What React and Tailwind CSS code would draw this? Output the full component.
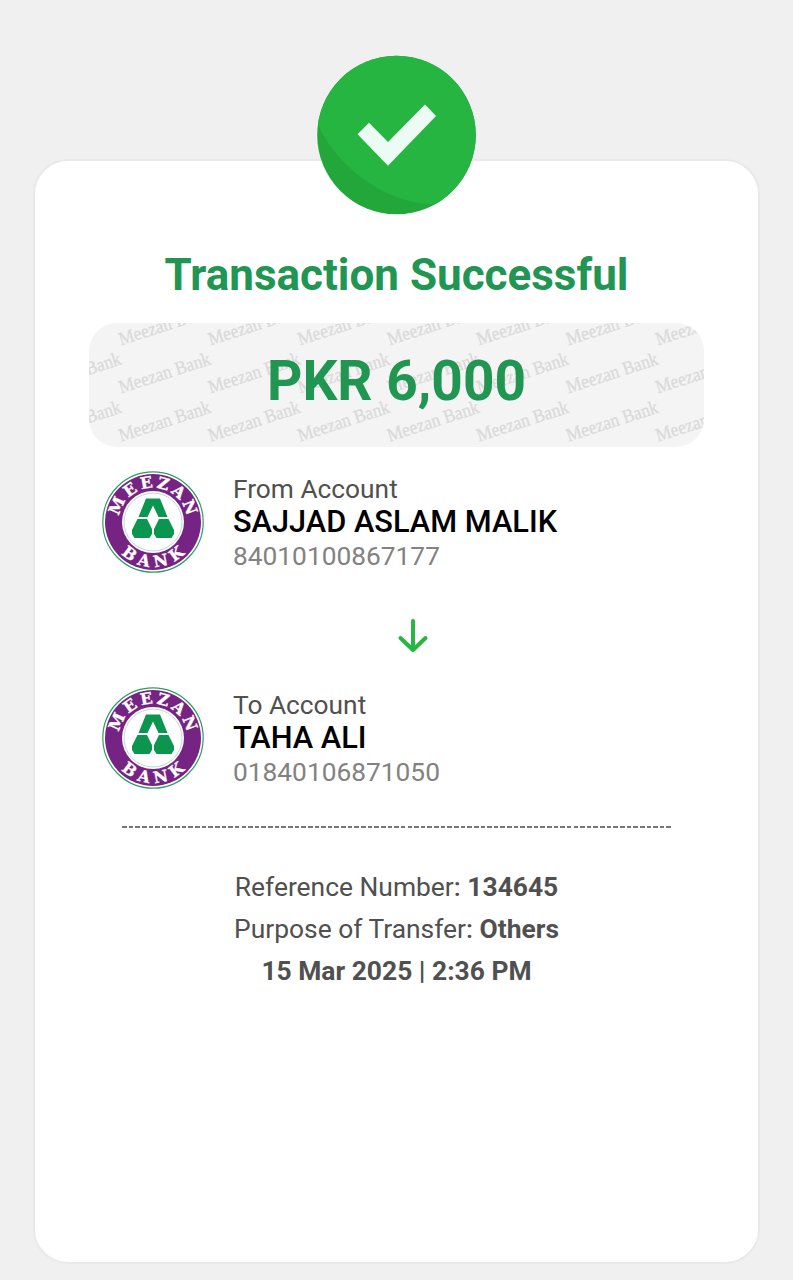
import React from "react";

function SuccessBadge() {
  return (
    <svg className="block h-[160px] w-[160px]" viewBox="0 0 160 160" aria-hidden="true">
      <defs>
        <clipPath id="badge-clip">
          <circle cx="79.5" cy="80" r="79.3" />
        </clipPath>
      </defs>
      <circle cx="79.5" cy="80" r="79.3" fill="#23a73b" />
      <g clipPath="url(#badge-clip)">
        <path d="M0 67 C15 105 65 151 121 149 L170 150 L170 -10 L-10 -10 L-10 67 Z" fill="#25b540" />
      </g>
      <path d="M40.5 79.3 L52 67.8 L71 87 L108 49.5 L119 61 L71 110.7 Z" fill="#ecfbf4" />
    </svg>
  );
}

const COLUMNS = [-57.5, 32, 121.5, 211, 300.5, 390, 479.5, 569];
const ROWS = [22.5, 70.5, 118.8];

function Watermark() {
  return (
    <svg className="absolute inset-0 h-full w-full" viewBox="0 0 615 124" aria-hidden="true">
      {ROWS.map((y) =>
        COLUMNS.map((x) => (
          <text
            key={`${x}-${y}`}
            transform={`translate(${x} ${y}) rotate(-18)`}
            textLength="95.5"
            lengthAdjust="spacingAndGlyphs"
            fontSize="19"
            fontFamily="'Liberation Serif', serif"
            fill="#dadada"
            stroke="#dadada"
            strokeWidth="0.3"
          >
            Meezan Bank
          </text>
        ))
      )}
    </svg>
  );
}

function BankLogo({ id }) {
  return (
    <svg className="block h-[102px] w-[102px] shrink-0" viewBox="-51 -51 102 102">
      <defs>
        <path id={`${id}-top`} d="M-32.7 10 A34.2 34.2 0 1 1 32.7 10" />
        <path id={`${id}-bottom`} d="M-45 0 A45 45 0 0 0 45 0" />
      </defs>
      <circle r="50.2" fill="#fff" stroke="#2f9b68" strokeWidth="1.2" />
      <circle r="48" fill="#752483" />
      <circle r="31" fill="#fff" />
      <circle r="29" fill="none" stroke="#a9cfc9" strokeWidth="0.8" />
      <g
        fill="#fff"
        stroke="#fff"
        strokeWidth="0.35"
        fontFamily="'DejaVu Serif', serif"
        fontWeight="700"
        fontSize="16"
      >
        <text textAnchor="middle" textLength="96">
          <textPath href={`#${id}-top`} startOffset="50%">MEEZAN</textPath>
        </text>
        <text textAnchor="middle" textLength="71">
          <textPath href={`#${id}-bottom`} startOffset="50%">BANK</textPath>
        </text>
      </g>
      <g fill="#0b9650">
        <path d="M-7 -23.5 H7 L14.5 -5 H5.5 L0 -16.5 L-5.5 -5 H-14.5 Z" />
        <path d="M-15.5 -3 H-6 L-1 7 V12 L-3.5 16 H-18.5 L-21 12 V8 Z" />
        <path d="M15.5 -3 H6 L1 7 V12 L3.5 16 H18.5 L21 12 V8 Z" />
      </g>
    </svg>
  );
}

function Account({ id, label, name, number }) {
  return (
    <div className="flex items-start gap-[29px] pl-[13px]">
      <BankLogo id={id} />
      <div className="-mb-[2px] flex flex-col whitespace-nowrap text-[26.3px]">
        <div className="leading-[37px] text-[#505050]">{label}</div>
        <div className="mb-[2px] text-[30.75px] font-medium leading-[28px] text-black">{name}</div>
        <div className="leading-[37px] text-[#828282]">{number}</div>
      </div>
    </div>
  );
}

export default function App() {
  return (
    <main className="flex h-[1280px] w-[793px] flex-col overflow-hidden bg-[#f0f0f0] px-[33px] pt-[159px] font-[Roboto,sans-serif]">
      <section className="flex h-[1105px] flex-col rounded-[35px] border-2 border-[#e9e9e9] bg-white px-[54px]">
        <div className="-mt-[106px] flex justify-center">
          <SuccessBadge />
        </div>
        <h1 className="mt-[34px] whitespace-nowrap text-center text-[44px] font-bold leading-[52px] text-[#219653]">
          Transaction Successful
        </h1>
        <div className="relative mt-[22px] flex h-[124px] items-center justify-center overflow-hidden rounded-[28px] bg-[#f4f4f4] pb-[7px]">
          <Watermark />
          <span className="relative text-[55px] font-bold leading-none text-[#219653]">PKR 6,000</span>
        </div>
        <div className="mt-[24px] flex flex-col">
          <Account id="from" label="From Account" name="SAJJAD ASLAM MALIK" number="84010100867177" />
          <div className="flex h-[114px] items-center justify-center pl-[33px] pt-[9px]">
            <svg className="h-[36px] w-[36px]" viewBox="0 0 36 36" fill="none" stroke="#26b641" strokeWidth="4" strokeLinecap="round" strokeLinejoin="round">
              <path d="M18 4 V33 M5.5 21 L18 33 L30.5 21" />
            </svg>
          </div>
          <Account id="to" label="To Account" name="TAHA ALI" number="01840106871050" />
        </div>
        <div className="mx-[33px] mt-[37px] h-[2px] bg-[repeating-linear-gradient(90deg,#777_0px,#777_4.6px,transparent_4.6px,transparent_6.64px)]" />
        <div className="mt-[38px] flex flex-col items-center whitespace-nowrap text-[26.4px] leading-[42px] text-[#505050]">
          <div>Reference Number<span className="font-medium">: </span><span className="font-bold">134645</span></div>
          <div>Purpose of Transfer<span className="font-medium">: </span><span className="font-bold">Others</span></div>
          <div className="font-bold">15 Mar 2025 | 2:36 PM</div>
        </div>
      </section>
    </main>
  );
}
